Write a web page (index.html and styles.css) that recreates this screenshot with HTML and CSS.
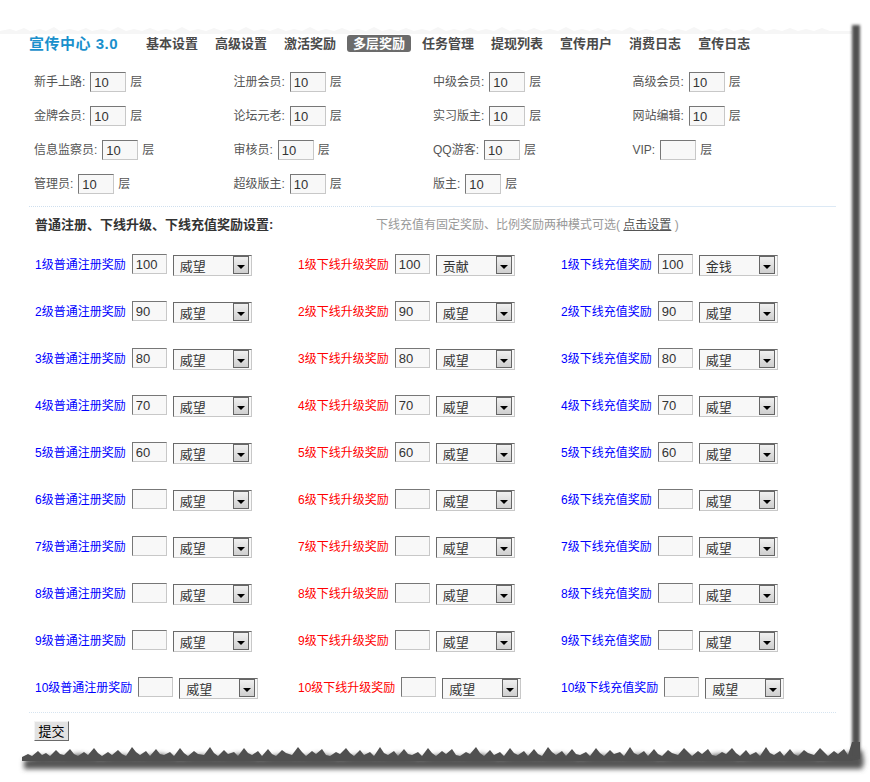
FILE: index.html
```html
<!DOCTYPE html>
<html>
<head>
<meta charset="utf-8" />
<title>宣传中心 3.0 - 多层奖励</title>
<link rel="stylesheet" href="styles.css">
</head>
<body>
<div class="page">
	<svg class="tear-top" width="852" height="35" viewBox="0 0 852 35">
		<polygon fill="#f6f6f6" points="0,31 10,29 16,31 24,28 30,31 40,29 46,31 54,27 60,31 70,29 78,31 86,28 92,31 102,29 110,31 118,27 126,31 134,29 142,31 150,28 158,31 166,29 174,31 182,27 190,31 198,29 206,31 214,28 222,31 230,29 238,31 246,27 254,31 262,29 270,31 278,28 286,31 294,29 302,31 310,27 318,31 326,29 334,31 342,28 350,31 358,29 366,31 374,27 382,31 390,29 398,31 406,28 414,31 422,29 430,31 438,27 446,31 454,29 462,31 470,28 478,31 486,29 494,31 502,27 510,31 518,29 526,31 534,28 542,31 550,29 558,31 566,27 574,31 582,29 590,31 598,28 606,31 614,29 622,31 630,27 638,31 646,29 654,31 662,28 670,31 678,29 686,31 694,27 702,31 710,29 718,31 726,28 734,31 742,29 750,31 758,27 766,31 774,29 782,31 790,28 798,31 806,29 814,31 822,28 830,31 852,31 852,34 0,34"/>
	</svg>

	<!-- 顶部导航 -->
	<div class="nav">
		<strong class="logo">宣传中心 3.0</strong>
		<a href="#">基本设置</a>
		<a href="#">高级设置</a>
		<a href="#">激活奖励</a>
		<a href="#" class="active">多层奖励</a>
		<a href="#">任务管理</a>
		<a href="#">提现列表</a>
		<a href="#">宣传用户</a>
		<a href="#">消费日志</a>
		<a href="#">宣传日志</a>
	</div>

	<!-- 用户组层数 -->
	<div class="levels">
		<div class="lv"><label>新手上路:</label><input type="text" value="10" /><span>层</span></div>
		<div class="lv"><label>注册会员:</label><input type="text" value="10" /><span>层</span></div>
		<div class="lv"><label>中级会员:</label><input type="text" value="10" /><span>层</span></div>
		<div class="lv"><label>高级会员:</label><input type="text" value="10" /><span>层</span></div>
		<div class="lv"><label>金牌会员:</label><input type="text" value="10" /><span>层</span></div>
		<div class="lv"><label>论坛元老:</label><input type="text" value="10" /><span>层</span></div>
		<div class="lv"><label>实习版主:</label><input type="text" value="10" /><span>层</span></div>
		<div class="lv"><label>网站编辑:</label><input type="text" value="10" /><span>层</span></div>
		<div class="lv"><label>信息监察员:</label><input type="text" value="10" /><span>层</span></div>
		<div class="lv"><label>审核员:</label><input type="text" value="10" /><span>层</span></div>
		<div class="lv"><label>QQ游客:</label><input type="text" value="10" /><span>层</span></div>
		<div class="lv"><label>VIP:</label><input type="text" value="" /><span>层</span></div>
		<div class="lv"><label>管理员:</label><input type="text" value="10" /><span>层</span></div>
		<div class="lv"><label>超级版主:</label><input type="text" value="10" /><span>层</span></div>
		<div class="lv"><label>版主:</label><input type="text" value="10" /><span>层</span></div>
	</div>

	<div class="sect-head">
		<div class="sect-title">普通注册、下线升级、下线充值奖励设置:</div>
		<div class="sect-note">下线充值有固定奖励、比例奖励两种模式可选( <a href="#">点击设置</a> )</div>
	</div>

	<!-- 奖励设置 -->
	<div class="rewards">
		<div class="rw"><label class="blue">1级普通注册奖励</label><input type="text" value="100" /><span class="sel"><select><option selected>威望</option><option>贡献</option><option>金钱</option></select><i></i></span></div>
		<div class="rw"><label class="red">1级下线升级奖励</label><input type="text" value="100" /><span class="sel"><select><option>威望</option><option selected>贡献</option><option>金钱</option></select><i></i></span></div>
		<div class="rw"><label class="blue">1级下线充值奖励</label><input type="text" value="100" /><span class="sel"><select><option>威望</option><option>贡献</option><option selected>金钱</option></select><i></i></span></div>

		<div class="rw"><label class="blue">2级普通注册奖励</label><input type="text" value="90" /><span class="sel"><select><option selected>威望</option><option>贡献</option><option>金钱</option></select><i></i></span></div>
		<div class="rw"><label class="red">2级下线升级奖励</label><input type="text" value="90" /><span class="sel"><select><option selected>威望</option><option>贡献</option><option>金钱</option></select><i></i></span></div>
		<div class="rw"><label class="blue">2级下线充值奖励</label><input type="text" value="90" /><span class="sel"><select><option selected>威望</option><option>贡献</option><option>金钱</option></select><i></i></span></div>

		<div class="rw"><label class="blue">3级普通注册奖励</label><input type="text" value="80" /><span class="sel"><select><option selected>威望</option><option>贡献</option><option>金钱</option></select><i></i></span></div>
		<div class="rw"><label class="red">3级下线升级奖励</label><input type="text" value="80" /><span class="sel"><select><option selected>威望</option><option>贡献</option><option>金钱</option></select><i></i></span></div>
		<div class="rw"><label class="blue">3级下线充值奖励</label><input type="text" value="80" /><span class="sel"><select><option selected>威望</option><option>贡献</option><option>金钱</option></select><i></i></span></div>

		<div class="rw"><label class="blue">4级普通注册奖励</label><input type="text" value="70" /><span class="sel"><select><option selected>威望</option><option>贡献</option><option>金钱</option></select><i></i></span></div>
		<div class="rw"><label class="red">4级下线升级奖励</label><input type="text" value="70" /><span class="sel"><select><option selected>威望</option><option>贡献</option><option>金钱</option></select><i></i></span></div>
		<div class="rw"><label class="blue">4级下线充值奖励</label><input type="text" value="70" /><span class="sel"><select><option selected>威望</option><option>贡献</option><option>金钱</option></select><i></i></span></div>

		<div class="rw"><label class="blue">5级普通注册奖励</label><input type="text" value="60" /><span class="sel"><select><option selected>威望</option><option>贡献</option><option>金钱</option></select><i></i></span></div>
		<div class="rw"><label class="red">5级下线升级奖励</label><input type="text" value="60" /><span class="sel"><select><option selected>威望</option><option>贡献</option><option>金钱</option></select><i></i></span></div>
		<div class="rw"><label class="blue">5级下线充值奖励</label><input type="text" value="60" /><span class="sel"><select><option selected>威望</option><option>贡献</option><option>金钱</option></select><i></i></span></div>

		<div class="rw"><label class="blue">6级普通注册奖励</label><input type="text" value="" /><span class="sel"><select><option selected>威望</option><option>贡献</option><option>金钱</option></select><i></i></span></div>
		<div class="rw"><label class="red">6级下线升级奖励</label><input type="text" value="" /><span class="sel"><select><option selected>威望</option><option>贡献</option><option>金钱</option></select><i></i></span></div>
		<div class="rw"><label class="blue">6级下线充值奖励</label><input type="text" value="" /><span class="sel"><select><option selected>威望</option><option>贡献</option><option>金钱</option></select><i></i></span></div>

		<div class="rw"><label class="blue">7级普通注册奖励</label><input type="text" value="" /><span class="sel"><select><option selected>威望</option><option>贡献</option><option>金钱</option></select><i></i></span></div>
		<div class="rw"><label class="red">7级下线升级奖励</label><input type="text" value="" /><span class="sel"><select><option selected>威望</option><option>贡献</option><option>金钱</option></select><i></i></span></div>
		<div class="rw"><label class="blue">7级下线充值奖励</label><input type="text" value="" /><span class="sel"><select><option selected>威望</option><option>贡献</option><option>金钱</option></select><i></i></span></div>

		<div class="rw"><label class="blue">8级普通注册奖励</label><input type="text" value="" /><span class="sel"><select><option selected>威望</option><option>贡献</option><option>金钱</option></select><i></i></span></div>
		<div class="rw"><label class="red">8级下线升级奖励</label><input type="text" value="" /><span class="sel"><select><option selected>威望</option><option>贡献</option><option>金钱</option></select><i></i></span></div>
		<div class="rw"><label class="blue">8级下线充值奖励</label><input type="text" value="" /><span class="sel"><select><option selected>威望</option><option>贡献</option><option>金钱</option></select><i></i></span></div>

		<div class="rw"><label class="blue">9级普通注册奖励</label><input type="text" value="" /><span class="sel"><select><option selected>威望</option><option>贡献</option><option>金钱</option></select><i></i></span></div>
		<div class="rw"><label class="red">9级下线升级奖励</label><input type="text" value="" /><span class="sel"><select><option selected>威望</option><option>贡献</option><option>金钱</option></select><i></i></span></div>
		<div class="rw"><label class="blue">9级下线充值奖励</label><input type="text" value="" /><span class="sel"><select><option selected>威望</option><option>贡献</option><option>金钱</option></select><i></i></span></div>

		<div class="rw"><label class="blue">10级普通注册奖励</label><input type="text" value="" /><span class="sel"><select><option selected>威望</option><option>贡献</option><option>金钱</option></select><i></i></span></div>
		<div class="rw"><label class="red">10级下线升级奖励</label><input type="text" value="" /><span class="sel"><select><option selected>威望</option><option>贡献</option><option>金钱</option></select><i></i></span></div>
		<div class="rw"><label class="blue">10级下线充值奖励</label><input type="text" value="" /><span class="sel"><select><option selected>威望</option><option>贡献</option><option>金钱</option></select><i></i></span></div>
	</div>

	<div class="foot">
		<button type="submit">提交</button>
	</div>
</div>

<!-- 底部撕纸效果 -->
<svg class="tear-bottom" width="870" height="40" viewBox="0 0 870 40">
	<defs>
		<filter id="soft" x="-5%" y="-50%" width="110%" height="200%"><feGaussianBlur stdDeviation="2.5"/></filter>
	</defs>
	<polygon filter="url(#soft)" fill="#555" points="24,18 40,14 60,15 80,12 100,16 120,13 140,15 160,12 180,16 200,13 220,15 240,12 260,16 280,13 300,15 320,12 340,16 360,13 380,15 400,12 420,16 440,13 460,15 480,12 500,16 520,13 540,15 560,12 580,16 600,13 620,15 640,12 660,16 680,13 700,15 720,12 740,16 760,13 780,15 800,12 820,16 840,13 862,8 864,20 862,27 24,27"/>
	<polygon fill="#505050" points="22,15 28,12 32,14 38,9 42,13 46,11 50,14 56,8 60,12 64,13 70,7 74,12 78,14 84,10 88,13 94,6 98,11 102,14 108,10 112,13 118,8 122,12 126,14 132,5 136,10 140,13 146,9 150,14 156,7 160,12 164,13 170,10 174,14 180,6 184,11 188,14 194,9 198,12 204,13 210,5 214,11 218,14 224,8 228,12 234,10 238,14 244,6 248,11 252,13 258,9 262,14 268,7 272,12 276,14 282,8 286,11 292,13 298,5 302,10 306,14 312,9 316,12 322,7 326,13 330,14 336,10 340,12 346,6 350,11 354,14 360,8 364,13 370,10 374,14 380,5 384,11 388,13 394,9 398,14 404,7 408,12 412,13 418,10 422,14 428,6 432,11 436,14 442,9 446,12 452,7 456,13 460,14 466,10 470,12 476,5 480,11 484,14 490,8 494,13 500,10 504,14 510,6 514,11 518,13 524,9 528,14 534,7 538,12 542,14 548,5 552,10 556,13 562,9 566,14 572,7 576,12 580,13 586,10 590,14 596,6 600,11 604,14 610,8 614,12 620,10 624,14 630,5 634,11 638,13 644,9 648,14 654,7 658,12 662,14 668,8 672,11 678,13 684,6 688,10 692,14 698,9 702,12 708,7 712,13 716,14 722,10 726,12 732,6 736,11 740,14 746,8 750,13 756,10 760,14 766,5 770,11 774,13 780,9 784,14 790,7 794,12 798,14 804,8 808,11 814,13 820,6 824,10 828,14 834,9 838,12 844,7 848,13 852,0 860,0 860,17 852,19 22,19"/>
</svg>
</body>
</html>
```

FILE: styles.css
```css
*{
	margin:0;
	padding:0;
	box-sizing:border-box;
}
body{
	background:#fff;
	font-family:"Liberation Sans","Noto Sans CJK SC",sans-serif;
	font-size:12px;
	color:#555;
	overflow:hidden;
}
a{
	text-decoration:none;
}
.page{
	position:relative;
	width:852px;
	padding:0 0 1px 29px;
	background:#fff;
}
/* 右侧阴影 */
.page::after{
	content:"";
	position:absolute;
	left:852px;
	top:25px;
	bottom:-16px;
	width:8px;
	background:#505050;
	filter:blur(1.5px);
}
.tear-top{
	display:block;
	margin-left:-29px;
}
.tear-bottom{
	display:block;
}

/* 导航 */
.nav{
	display:flex;
	align-items:center;
	gap:5px;
	height:17px;
}
.nav .logo{
	width:106px;
	font-size:15px;
	line-height:17px;
	letter-spacing:0.5px;
	color:#1a90cc;
}
.nav a{
	display:block;
	padding:0 6px;
	height:17px;
	line-height:17px;
	font-size:13px;
	font-weight:bold;
	color:#4a4a4a;
	border-radius:3px;
}
.nav a.active{
	background:#6b6b6b;
	color:#fff;
}

/* 层数 */
.levels{
	display:grid;
	grid-template-columns:repeat(4,199.5px);
	grid-auto-rows:34px;
	margin:13px 0 0 5px;
}
.lv{
	display:flex;
	align-items:center;
	line-height:18px;
}
.lv label{
	margin-right:5px;
}
.lv input,.rw input{
	width:36px;
	height:20px;
	padding:0 3px;
	border:1px solid;
	border-color:#777 #c8c8c8 #c8c8c8 #777;
	background:#f8f8f8;
	font-family:"Liberation Sans",sans-serif;
	font-size:13px;
	color:#333;
	outline:none;
}
.lv span{
	margin-left:4px;
}

/* 分隔 */
.sect-head{
	display:flex;
	margin-top:5px;
	line-height:18px;
}
.sect-title{
	width:343px;
	padding:9px 0 0 6px;
	border-top:1px dotted #cfdfee;
	font-size:13px;
	font-weight:bold;
	color:#333;
}
.sect-note{
	width:464px;
	padding:9px 0 0 4px;
	border-top:1px solid #dce9f5;
	color:#999;
}
.sect-note a{
	color:#555;
	text-decoration:underline;
}

/* 奖励 */
.rewards{
	display:grid;
	grid-template-columns:repeat(3,263px);
	grid-auto-rows:47px;
	margin:7px 0 0 6px;
}
.rw{
	display:flex;
	align-items:center;
	line-height:18px;
}
.rw label{
	margin-right:6px;
}
.blue{
	color:#0000ff;
}
.red{
	color:#ff0000;
}
.rw input{
	width:35px;
	margin-right:6px;
	margin-top:-1px;
}
.sel{
	position:relative;
	display:block;
	width:79px;
	height:21px;
	margin-top:2px;
}
.sel select{
	-webkit-appearance:none;
	appearance:none;
	display:block;
	width:79px;
	height:21px;
	padding:2px 0 0 6px;
	border:1px solid;
	border-color:#6a6a6a #c8c8c8 #c8c8c8 #6a6a6a;
	background:#f8f8f8;
	font-family:"Liberation Sans","Noto Sans CJK SC",sans-serif;
	font-size:13px;
	color:#333;
	outline:none;
	border-radius:0;
}
.sel i{
	position:absolute;
	right:3px;
	top:1px;
	width:16px;
	height:18px;
	border:1px solid #666;
	background:linear-gradient(#f0f0f0,#cfcfcf);
	pointer-events:none;
}
.sel i::after{
	content:"";
	position:absolute;
	left:3px;
	top:8px;
	border-left:4px solid transparent;
	border-right:4px solid transparent;
	border-top:4px solid #000;
}

/* 底部 */
.foot{
	width:807px;
	margin-top:1px;
	padding:8px 0 0 5px;
	border-top:1px dotted #d6e4f0;
}
.foot button{
	display:block;
	width:35px;
	height:20px;
	border:1px solid;
	border-color:#f4f4f4 #6a6a6a #6a6a6a #f4f4f4;
	background:#e2e2e2;
	font-family:"Liberation Sans","Noto Sans CJK SC",sans-serif;
	font-size:13px;
	line-height:17px;
	color:#000;
}
```
